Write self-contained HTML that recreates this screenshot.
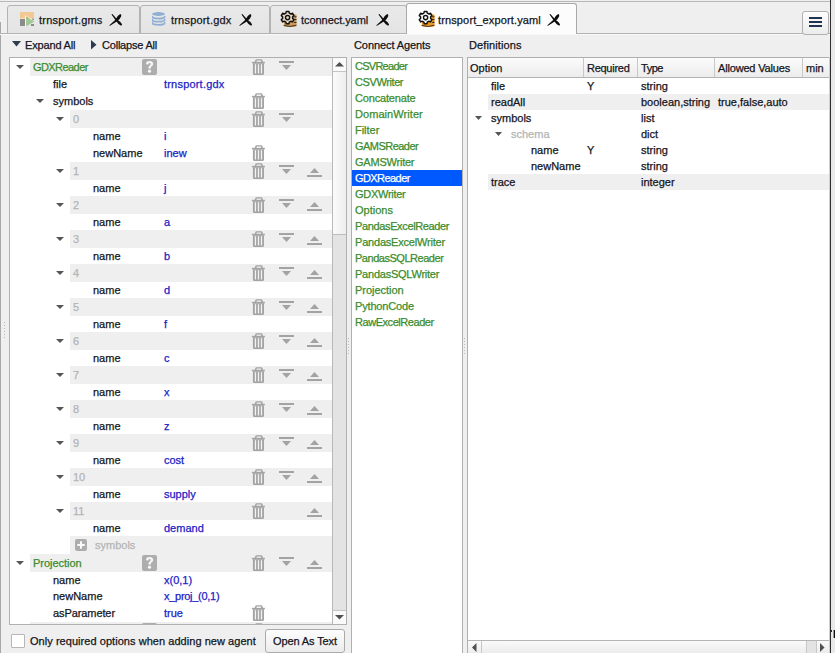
<!DOCTYPE html>
<html><head><meta charset="utf-8"><style>
html,body{margin:0;padding:0;}
body{width:835px;height:653px;position:relative;overflow:hidden;background:#efefef;font-family:"Liberation Sans", sans-serif;font-size:11px;}
.t{position:absolute;white-space:nowrap;-webkit-text-stroke:0.25px currentColor;}
svg{display:block}
</style></head><body>
<div style="position:absolute;left:0px;top:1px;width:835px;height:1px;background:#b9b9b9"></div><div style="position:absolute;left:0px;top:22px;width:1px;height:631px;background:#a8a8a8"></div><div style="position:absolute;left:7px;top:5px;width:133px;height:29px;background:linear-gradient(#e9e9e9,#e4e4e4);border:1px solid #b3b3b3;border-radius:3px 3px 0 0;box-sizing:border-box"></div><div style="position:absolute;left:140px;top:5px;width:130px;height:29px;background:linear-gradient(#e9e9e9,#e4e4e4);border:1px solid #b3b3b3;border-radius:3px 3px 0 0;box-sizing:border-box"></div><div style="position:absolute;left:270px;top:5px;width:137px;height:29px;background:linear-gradient(#e9e9e9,#e4e4e4);border:1px solid #b3b3b3;border-radius:3px 3px 0 0;box-sizing:border-box"></div><div style="position:absolute;left:0px;top:33px;width:835px;height:1px;background:#b3b3b3"></div><div style="position:absolute;left:0px;top:34px;width:835px;height:1px;background:#f8f8f8"></div><div style="position:absolute;left:406px;top:3px;width:171px;height:31px;background:#fcfcfc;border:1px solid #a9a9a9;border-bottom:none;border-radius:3px 3px 0 0;box-sizing:border-box"></div><svg style="position:absolute;left:20px;top:12px" width="16" height="15" viewBox="0 0 16 15">
<rect x="0" y="0" width="14" height="6.3" fill="#f3c993"/>
<rect x="0" y="7" width="5" height="7" fill="#8b8b8b"/>
<rect x="11" y="12" width="3" height="2" fill="#8b8b8b"/>
<rect x="12" y="6.5" width="2" height="2" fill="#9a9a9a"/>
<path d="M5.2 3.2 L15.3 9.6 L5.2 15Z" fill="#fff"/>
<path d="M6 4.4 L14.8 9.6 L6 14.6Z" fill="#a2c895"/>
<path d="M6 4.4 L9.5 6.4 L6 6.4Z" fill="#b7b060"/>
</svg><div class="t" style="left:39px;top:12px;height:16px;line-height:16px;color:#141420;letter-spacing:0.204px;">trnsport.gms</div><svg style="position:absolute;left:109px;top:13px" width="14" height="14" viewBox="0 0 14 14">
<path d="M2.5 1.6 Q2.8 0.8 3.6 1.2 L8.2 6.4 Q12 8.8 13 11.3 Q13.2 12.8 11.7 12.5 Q9.4 11.6 6.9 7.8 Z" fill="#0d0d0d"/>
<path d="M11.2 1.1 Q12.7 1.3 12.2 3.2 Q11.2 5.8 8.2 8.3 L1 12.8 Q0.2 13 0.4 12.3 L6.4 6.8 Q8.6 2.4 11.2 1.1 Z" fill="#0d0d0d"/>
</svg><svg style="position:absolute;left:152px;top:12px" width="14" height="14" viewBox="0 0 14 14">
<ellipse cx="6.5" cy="2" rx="6.4" ry="1.9" fill="#90b0d3"/>
<path d="M0.3 4.6 Q0.3 6.6 6.5 6.6 Q12.7 6.6 12.7 4.6" fill="none" stroke="#90b0d3" stroke-width="1.8" stroke-linecap="round"/>
<path d="M0.3 7.7 Q0.3 9.7 6.5 9.7 Q12.7 9.7 12.7 7.7" fill="none" stroke="#90b0d3" stroke-width="1.8" stroke-linecap="round"/>
<path d="M0.3 10.8 Q0.3 12.8 6.5 12.8 Q12.7 12.8 12.7 10.8" fill="none" stroke="#90b0d3" stroke-width="1.8" stroke-linecap="round"/>
</svg><div class="t" style="left:171px;top:12px;height:16px;line-height:16px;color:#141420;letter-spacing:0.198px;">trnsport.gdx</div><svg style="position:absolute;left:239px;top:13px" width="14" height="14" viewBox="0 0 14 14">
<path d="M2.5 1.6 Q2.8 0.8 3.6 1.2 L8.2 6.4 Q12 8.8 13 11.3 Q13.2 12.8 11.7 12.5 Q9.4 11.6 6.9 7.8 Z" fill="#0d0d0d"/>
<path d="M11.2 1.1 Q12.7 1.3 12.2 3.2 Q11.2 5.8 8.2 8.3 L1 12.8 Q0.2 13 0.4 12.3 L6.4 6.8 Q8.6 2.4 11.2 1.1 Z" fill="#0d0d0d"/>
</svg><svg style="position:absolute;left:280px;top:10px" width="18" height="18" viewBox="0 0 18 18">
<path d="M4 4.5 H16.5 V15.8 Q16.5 17 10.2 17 Q4 17 4 15.8Z" fill="#cf9a58"/>
<path d="M14.2 6.8 h2.3 M14.2 9.6 h2.3 M14.2 12.4 h2.3" stroke="#222" stroke-width="1"/>
<path d="M3.5 15.4 Q10 17.6 16.5 15.2" stroke="#2a2a2a" stroke-width="0.9" fill="none"/>
<g transform="translate(7.6 7.6)">
<path d="M-1.3 -6.2 H1.3 L1.7 -4.5 L3.4 -3.6 L5 -4.3 L6.3 -2 L5 -0.9 V0.9 L6.3 2 L5 4.3 L3.4 3.6 L1.7 4.5 L1.3 6.2 H-1.3 L-1.7 4.5 L-3.4 3.6 L-5 4.3 L-6.3 2 L-5 0.9 V-0.9 L-6.3 -2 L-5 -4.3 L-3.4 -3.6 L-1.7 -4.5Z" fill="#e9dcc6" stroke="#111" stroke-width="1.5" stroke-linejoin="round"/>
<circle r="2.1" fill="none" stroke="#111" stroke-width="1.4"/>
</g></svg><div class="t" style="left:301px;top:12px;height:16px;line-height:16px;color:#141420;letter-spacing:-0.054px;">tconnect.yaml</div><svg style="position:absolute;left:376px;top:13px" width="14" height="14" viewBox="0 0 14 14">
<path d="M2.5 1.6 Q2.8 0.8 3.6 1.2 L8.2 6.4 Q12 8.8 13 11.3 Q13.2 12.8 11.7 12.5 Q9.4 11.6 6.9 7.8 Z" fill="#0d0d0d"/>
<path d="M11.2 1.1 Q12.7 1.3 12.2 3.2 Q11.2 5.8 8.2 8.3 L1 12.8 Q0.2 13 0.4 12.3 L6.4 6.8 Q8.6 2.4 11.2 1.1 Z" fill="#0d0d0d"/>
</svg><svg style="position:absolute;left:417.5px;top:9.7px" width="18" height="18" viewBox="0 0 18 18">
<path d="M4 4.5 H16.5 V15.8 Q16.5 17 10.2 17 Q4 17 4 15.8Z" fill="#f29a1f"/>
<path d="M14.2 6.8 h2.3 M14.2 9.6 h2.3 M14.2 12.4 h2.3" stroke="#222" stroke-width="1"/>
<path d="M3.5 15.4 Q10 17.6 16.5 15.2" stroke="#2a2a2a" stroke-width="0.9" fill="none"/>
<g transform="translate(7.6 7.6)">
<path d="M-1.3 -6.2 H1.3 L1.7 -4.5 L3.4 -3.6 L5 -4.3 L6.3 -2 L5 -0.9 V0.9 L6.3 2 L5 4.3 L3.4 3.6 L1.7 4.5 L1.3 6.2 H-1.3 L-1.7 4.5 L-3.4 3.6 L-5 4.3 L-6.3 2 L-5 0.9 V-0.9 L-6.3 -2 L-5 -4.3 L-3.4 -3.6 L-1.7 -4.5Z" fill="#fff" stroke="#111" stroke-width="1.5" stroke-linejoin="round"/>
<circle r="2.1" fill="none" stroke="#111" stroke-width="1.4"/>
</g></svg><div class="t" style="left:438px;top:12px;height:16px;line-height:16px;color:#141420;letter-spacing:0.134px;">trnsport_export.yaml</div><svg style="position:absolute;left:547px;top:13px" width="14" height="14" viewBox="0 0 14 14">
<path d="M2.5 1.6 Q2.8 0.8 3.6 1.2 L8.2 6.4 Q12 8.8 13 11.3 Q13.2 12.8 11.7 12.5 Q9.4 11.6 6.9 7.8 Z" fill="#0d0d0d"/>
<path d="M11.2 1.1 Q12.7 1.3 12.2 3.2 Q11.2 5.8 8.2 8.3 L1 12.8 Q0.2 13 0.4 12.3 L6.4 6.8 Q8.6 2.4 11.2 1.1 Z" fill="#0d0d0d"/>
</svg><div style="position:absolute;left:802px;top:11px;width:27px;height:24px;background:linear-gradient(#fdfdfd,#ececec);border:1px solid #b0b0b0;border-radius:3px;box-sizing:border-box"></div><div style="position:absolute;left:809px;top:17px;width:13px;height:2px;background:#1f3450"></div><div style="position:absolute;left:809px;top:21px;width:13px;height:2px;background:#1f3450"></div><div style="position:absolute;left:809px;top:25px;width:13px;height:2px;background:#1f3450"></div><svg style="position:absolute;left:12px;top:41px" width="9" height="5.6"><path d="M0 0H9L4.5 5.6Z" fill="#2f3d50"/></svg><div class="t" style="left:25px;top:37px;height:16px;line-height:16px;color:#141420;letter-spacing:-0.162px;">Expand All</div><svg style="position:absolute;left:91px;top:40px" width="6" height="10"><path d="M0 0L5.5 4.8L0 9.6Z" fill="#2e3b4e"/></svg><div class="t" style="left:102px;top:37px;height:16px;line-height:16px;color:#141420;letter-spacing:-0.207px;">Collapse All</div><div class="t" style="left:354px;top:37px;height:16px;line-height:16px;color:#141420;letter-spacing:-0.088px;">Connect Agents</div><div class="t" style="left:469px;top:37px;height:16px;line-height:16px;color:#141420;letter-spacing:0.102px;">Definitions</div><div style="position:absolute;left:9px;top:57px;width:338px;height:568px;border:1px solid #b0b0b0;box-sizing:border-box;background:#fff;overflow:hidden"><div style="position:absolute;left:20px;top:0px;width:302px;height:18px;background:#efefef"></div><svg style="position:absolute;left:6px;top:7px" width="8" height="4"><path d="M0 0H8L4 4Z" fill="#555"/></svg><div class="t" style="left:23px;top:1px;height:16px;line-height:16px;color:#3b8c2c;letter-spacing:-0.571px;">GDXReader</div><svg style="position:absolute;left:132px;top:1px" width="15" height="16" viewBox="0 0 15 16">
<rect x="0" y="0" width="15" height="16" rx="2" fill="#adadad"/>
<path d="M4 5.3 Q4 2 7.6 2 Q11.2 2 11.2 4.9 Q11.2 6.6 9.4 7.6 Q8.7 8 8.7 9.6 H6.3 Q6.3 7.6 7.5 6.8 Q8.7 6 8.7 5.1 Q8.7 4.1 7.6 4.1 Q6.5 4.1 6.5 5.5Z" fill="#f6f6f6"/>
<circle cx="7.5" cy="12.2" r="1.6" fill="#f6f6f6"/></svg><svg style="position:absolute;left:241px;top:1px" width="15" height="17" viewBox="0 0 15 17">
<path d="M3.7 2.9 L4.5 0.8 Q4.7 0.2 5.4 0.2 H10.4 Q11.1 0.2 11.3 0.8 L12 2.9 H10.3 L9.9 1.5 H5.8 L5.4 2.9Z" fill="#a3a3a3"/>
<rect x="0.9" y="2.8" width="13" height="1.5" fill="#a3a3a3"/>
<path d="M1.9 4.3 H13 V14.4 Q13 15.9 11.5 15.9 H3.4 Q1.9 15.9 1.9 14.4Z" fill="#a3a3a3"/>
<rect x="3.8" y="5.2" width="1.3" height="9.3" fill="#f3f3f3"/>
<rect x="6.85" y="5.2" width="1.3" height="9.3" fill="#f3f3f3"/>
<rect x="9.85" y="5.2" width="1.3" height="9.3" fill="#f3f3f3"/>
</svg><svg style="position:absolute;left:269px;top:3px" width="15" height="10" viewBox="0 0 15 10">
<rect x="0" y="0" width="15" height="2" fill="#a3a3a3"/>
<path d="M3 4 H12 L7.5 9Z" fill="#a3a3a3"/></svg><div class="t" style="left:43px;top:18px;height:16px;line-height:16px;color:#141420;">file</div><div class="t" style="left:154px;top:18px;height:16px;line-height:16px;color:#2020c4;letter-spacing:0.198px;">trnsport.gdx</div><svg style="position:absolute;left:26px;top:41px" width="8" height="4"><path d="M0 0H8L4 4Z" fill="#555"/></svg><div class="t" style="left:43px;top:35px;height:16px;line-height:16px;color:#141420;">symbols</div><svg style="position:absolute;left:241px;top:35px" width="15" height="17" viewBox="0 0 15 17">
<path d="M3.7 2.9 L4.5 0.8 Q4.7 0.2 5.4 0.2 H10.4 Q11.1 0.2 11.3 0.8 L12 2.9 H10.3 L9.9 1.5 H5.8 L5.4 2.9Z" fill="#a3a3a3"/>
<rect x="0.9" y="2.8" width="13" height="1.5" fill="#a3a3a3"/>
<path d="M1.9 4.3 H13 V14.4 Q13 15.9 11.5 15.9 H3.4 Q1.9 15.9 1.9 14.4Z" fill="#a3a3a3"/>
<rect x="3.8" y="5.2" width="1.3" height="9.3" fill="#f3f3f3"/>
<rect x="6.85" y="5.2" width="1.3" height="9.3" fill="#f3f3f3"/>
<rect x="9.85" y="5.2" width="1.3" height="9.3" fill="#f3f3f3"/>
</svg><div style="position:absolute;left:60px;top:52px;width:262px;height:18px;background:#efefef"></div><svg style="position:absolute;left:46px;top:59px" width="8" height="4"><path d="M0 0H8L4 4Z" fill="#555"/></svg><div class="t" style="left:63px;top:53px;height:16px;line-height:16px;color:#b4b4b4;">0</div><svg style="position:absolute;left:241px;top:53px" width="15" height="17" viewBox="0 0 15 17">
<path d="M3.7 2.9 L4.5 0.8 Q4.7 0.2 5.4 0.2 H10.4 Q11.1 0.2 11.3 0.8 L12 2.9 H10.3 L9.9 1.5 H5.8 L5.4 2.9Z" fill="#a3a3a3"/>
<rect x="0.9" y="2.8" width="13" height="1.5" fill="#a3a3a3"/>
<path d="M1.9 4.3 H13 V14.4 Q13 15.9 11.5 15.9 H3.4 Q1.9 15.9 1.9 14.4Z" fill="#a3a3a3"/>
<rect x="3.8" y="5.2" width="1.3" height="9.3" fill="#f3f3f3"/>
<rect x="6.85" y="5.2" width="1.3" height="9.3" fill="#f3f3f3"/>
<rect x="9.85" y="5.2" width="1.3" height="9.3" fill="#f3f3f3"/>
</svg><svg style="position:absolute;left:269px;top:55px" width="15" height="10" viewBox="0 0 15 10">
<rect x="0" y="0" width="15" height="2" fill="#a3a3a3"/>
<path d="M3 4 H12 L7.5 9Z" fill="#a3a3a3"/></svg><div class="t" style="left:83px;top:70px;height:16px;line-height:16px;color:#141420;">name</div><div class="t" style="left:154px;top:70px;height:16px;line-height:16px;color:#2020c4;">i</div><div class="t" style="left:83px;top:87px;height:16px;line-height:16px;color:#141420;">newName</div><div class="t" style="left:154px;top:87px;height:16px;line-height:16px;color:#2020c4;">inew</div><svg style="position:absolute;left:241px;top:87px" width="15" height="17" viewBox="0 0 15 17">
<path d="M3.7 2.9 L4.5 0.8 Q4.7 0.2 5.4 0.2 H10.4 Q11.1 0.2 11.3 0.8 L12 2.9 H10.3 L9.9 1.5 H5.8 L5.4 2.9Z" fill="#a3a3a3"/>
<rect x="0.9" y="2.8" width="13" height="1.5" fill="#a3a3a3"/>
<path d="M1.9 4.3 H13 V14.4 Q13 15.9 11.5 15.9 H3.4 Q1.9 15.9 1.9 14.4Z" fill="#a3a3a3"/>
<rect x="3.8" y="5.2" width="1.3" height="9.3" fill="#f3f3f3"/>
<rect x="6.85" y="5.2" width="1.3" height="9.3" fill="#f3f3f3"/>
<rect x="9.85" y="5.2" width="1.3" height="9.3" fill="#f3f3f3"/>
</svg><div style="position:absolute;left:60px;top:104px;width:262px;height:18px;background:#efefef"></div><svg style="position:absolute;left:46px;top:111px" width="8" height="4"><path d="M0 0H8L4 4Z" fill="#555"/></svg><div class="t" style="left:63px;top:105px;height:16px;line-height:16px;color:#b4b4b4;">1</div><svg style="position:absolute;left:241px;top:105px" width="15" height="17" viewBox="0 0 15 17">
<path d="M3.7 2.9 L4.5 0.8 Q4.7 0.2 5.4 0.2 H10.4 Q11.1 0.2 11.3 0.8 L12 2.9 H10.3 L9.9 1.5 H5.8 L5.4 2.9Z" fill="#a3a3a3"/>
<rect x="0.9" y="2.8" width="13" height="1.5" fill="#a3a3a3"/>
<path d="M1.9 4.3 H13 V14.4 Q13 15.9 11.5 15.9 H3.4 Q1.9 15.9 1.9 14.4Z" fill="#a3a3a3"/>
<rect x="3.8" y="5.2" width="1.3" height="9.3" fill="#f3f3f3"/>
<rect x="6.85" y="5.2" width="1.3" height="9.3" fill="#f3f3f3"/>
<rect x="9.85" y="5.2" width="1.3" height="9.3" fill="#f3f3f3"/>
</svg><svg style="position:absolute;left:269px;top:107px" width="15" height="10" viewBox="0 0 15 10">
<rect x="0" y="0" width="15" height="2" fill="#a3a3a3"/>
<path d="M3 4 H12 L7.5 9Z" fill="#a3a3a3"/></svg><svg style="position:absolute;left:297px;top:110px" width="15" height="11" viewBox="0 0 15 11">
<path d="M7.5 0 L12 5 H3Z" fill="#a3a3a3"/>
<rect x="0" y="7" width="15" height="2" fill="#a3a3a3"/></svg><div class="t" style="left:83px;top:122px;height:16px;line-height:16px;color:#141420;">name</div><div class="t" style="left:154px;top:122px;height:16px;line-height:16px;color:#2020c4;">j</div><div style="position:absolute;left:60px;top:138px;width:262px;height:18px;background:#efefef"></div><svg style="position:absolute;left:46px;top:145px" width="8" height="4"><path d="M0 0H8L4 4Z" fill="#555"/></svg><div class="t" style="left:63px;top:139px;height:16px;line-height:16px;color:#b4b4b4;">2</div><svg style="position:absolute;left:241px;top:139px" width="15" height="17" viewBox="0 0 15 17">
<path d="M3.7 2.9 L4.5 0.8 Q4.7 0.2 5.4 0.2 H10.4 Q11.1 0.2 11.3 0.8 L12 2.9 H10.3 L9.9 1.5 H5.8 L5.4 2.9Z" fill="#a3a3a3"/>
<rect x="0.9" y="2.8" width="13" height="1.5" fill="#a3a3a3"/>
<path d="M1.9 4.3 H13 V14.4 Q13 15.9 11.5 15.9 H3.4 Q1.9 15.9 1.9 14.4Z" fill="#a3a3a3"/>
<rect x="3.8" y="5.2" width="1.3" height="9.3" fill="#f3f3f3"/>
<rect x="6.85" y="5.2" width="1.3" height="9.3" fill="#f3f3f3"/>
<rect x="9.85" y="5.2" width="1.3" height="9.3" fill="#f3f3f3"/>
</svg><svg style="position:absolute;left:269px;top:141px" width="15" height="10" viewBox="0 0 15 10">
<rect x="0" y="0" width="15" height="2" fill="#a3a3a3"/>
<path d="M3 4 H12 L7.5 9Z" fill="#a3a3a3"/></svg><svg style="position:absolute;left:297px;top:144px" width="15" height="11" viewBox="0 0 15 11">
<path d="M7.5 0 L12 5 H3Z" fill="#a3a3a3"/>
<rect x="0" y="7" width="15" height="2" fill="#a3a3a3"/></svg><div class="t" style="left:83px;top:156px;height:16px;line-height:16px;color:#141420;">name</div><div class="t" style="left:154px;top:156px;height:16px;line-height:16px;color:#2020c4;">a</div><div style="position:absolute;left:60px;top:172px;width:262px;height:18px;background:#efefef"></div><svg style="position:absolute;left:46px;top:179px" width="8" height="4"><path d="M0 0H8L4 4Z" fill="#555"/></svg><div class="t" style="left:63px;top:173px;height:16px;line-height:16px;color:#b4b4b4;">3</div><svg style="position:absolute;left:241px;top:173px" width="15" height="17" viewBox="0 0 15 17">
<path d="M3.7 2.9 L4.5 0.8 Q4.7 0.2 5.4 0.2 H10.4 Q11.1 0.2 11.3 0.8 L12 2.9 H10.3 L9.9 1.5 H5.8 L5.4 2.9Z" fill="#a3a3a3"/>
<rect x="0.9" y="2.8" width="13" height="1.5" fill="#a3a3a3"/>
<path d="M1.9 4.3 H13 V14.4 Q13 15.9 11.5 15.9 H3.4 Q1.9 15.9 1.9 14.4Z" fill="#a3a3a3"/>
<rect x="3.8" y="5.2" width="1.3" height="9.3" fill="#f3f3f3"/>
<rect x="6.85" y="5.2" width="1.3" height="9.3" fill="#f3f3f3"/>
<rect x="9.85" y="5.2" width="1.3" height="9.3" fill="#f3f3f3"/>
</svg><svg style="position:absolute;left:269px;top:175px" width="15" height="10" viewBox="0 0 15 10">
<rect x="0" y="0" width="15" height="2" fill="#a3a3a3"/>
<path d="M3 4 H12 L7.5 9Z" fill="#a3a3a3"/></svg><svg style="position:absolute;left:297px;top:178px" width="15" height="11" viewBox="0 0 15 11">
<path d="M7.5 0 L12 5 H3Z" fill="#a3a3a3"/>
<rect x="0" y="7" width="15" height="2" fill="#a3a3a3"/></svg><div class="t" style="left:83px;top:190px;height:16px;line-height:16px;color:#141420;">name</div><div class="t" style="left:154px;top:190px;height:16px;line-height:16px;color:#2020c4;">b</div><div style="position:absolute;left:60px;top:206px;width:262px;height:18px;background:#efefef"></div><svg style="position:absolute;left:46px;top:213px" width="8" height="4"><path d="M0 0H8L4 4Z" fill="#555"/></svg><div class="t" style="left:63px;top:207px;height:16px;line-height:16px;color:#b4b4b4;">4</div><svg style="position:absolute;left:241px;top:207px" width="15" height="17" viewBox="0 0 15 17">
<path d="M3.7 2.9 L4.5 0.8 Q4.7 0.2 5.4 0.2 H10.4 Q11.1 0.2 11.3 0.8 L12 2.9 H10.3 L9.9 1.5 H5.8 L5.4 2.9Z" fill="#a3a3a3"/>
<rect x="0.9" y="2.8" width="13" height="1.5" fill="#a3a3a3"/>
<path d="M1.9 4.3 H13 V14.4 Q13 15.9 11.5 15.9 H3.4 Q1.9 15.9 1.9 14.4Z" fill="#a3a3a3"/>
<rect x="3.8" y="5.2" width="1.3" height="9.3" fill="#f3f3f3"/>
<rect x="6.85" y="5.2" width="1.3" height="9.3" fill="#f3f3f3"/>
<rect x="9.85" y="5.2" width="1.3" height="9.3" fill="#f3f3f3"/>
</svg><svg style="position:absolute;left:269px;top:209px" width="15" height="10" viewBox="0 0 15 10">
<rect x="0" y="0" width="15" height="2" fill="#a3a3a3"/>
<path d="M3 4 H12 L7.5 9Z" fill="#a3a3a3"/></svg><svg style="position:absolute;left:297px;top:212px" width="15" height="11" viewBox="0 0 15 11">
<path d="M7.5 0 L12 5 H3Z" fill="#a3a3a3"/>
<rect x="0" y="7" width="15" height="2" fill="#a3a3a3"/></svg><div class="t" style="left:83px;top:224px;height:16px;line-height:16px;color:#141420;">name</div><div class="t" style="left:154px;top:224px;height:16px;line-height:16px;color:#2020c4;">d</div><div style="position:absolute;left:60px;top:240px;width:262px;height:18px;background:#efefef"></div><svg style="position:absolute;left:46px;top:247px" width="8" height="4"><path d="M0 0H8L4 4Z" fill="#555"/></svg><div class="t" style="left:63px;top:241px;height:16px;line-height:16px;color:#b4b4b4;">5</div><svg style="position:absolute;left:241px;top:241px" width="15" height="17" viewBox="0 0 15 17">
<path d="M3.7 2.9 L4.5 0.8 Q4.7 0.2 5.4 0.2 H10.4 Q11.1 0.2 11.3 0.8 L12 2.9 H10.3 L9.9 1.5 H5.8 L5.4 2.9Z" fill="#a3a3a3"/>
<rect x="0.9" y="2.8" width="13" height="1.5" fill="#a3a3a3"/>
<path d="M1.9 4.3 H13 V14.4 Q13 15.9 11.5 15.9 H3.4 Q1.9 15.9 1.9 14.4Z" fill="#a3a3a3"/>
<rect x="3.8" y="5.2" width="1.3" height="9.3" fill="#f3f3f3"/>
<rect x="6.85" y="5.2" width="1.3" height="9.3" fill="#f3f3f3"/>
<rect x="9.85" y="5.2" width="1.3" height="9.3" fill="#f3f3f3"/>
</svg><svg style="position:absolute;left:269px;top:243px" width="15" height="10" viewBox="0 0 15 10">
<rect x="0" y="0" width="15" height="2" fill="#a3a3a3"/>
<path d="M3 4 H12 L7.5 9Z" fill="#a3a3a3"/></svg><svg style="position:absolute;left:297px;top:246px" width="15" height="11" viewBox="0 0 15 11">
<path d="M7.5 0 L12 5 H3Z" fill="#a3a3a3"/>
<rect x="0" y="7" width="15" height="2" fill="#a3a3a3"/></svg><div class="t" style="left:83px;top:258px;height:16px;line-height:16px;color:#141420;">name</div><div class="t" style="left:154px;top:258px;height:16px;line-height:16px;color:#2020c4;">f</div><div style="position:absolute;left:60px;top:274px;width:262px;height:18px;background:#efefef"></div><svg style="position:absolute;left:46px;top:281px" width="8" height="4"><path d="M0 0H8L4 4Z" fill="#555"/></svg><div class="t" style="left:63px;top:275px;height:16px;line-height:16px;color:#b4b4b4;">6</div><svg style="position:absolute;left:241px;top:275px" width="15" height="17" viewBox="0 0 15 17">
<path d="M3.7 2.9 L4.5 0.8 Q4.7 0.2 5.4 0.2 H10.4 Q11.1 0.2 11.3 0.8 L12 2.9 H10.3 L9.9 1.5 H5.8 L5.4 2.9Z" fill="#a3a3a3"/>
<rect x="0.9" y="2.8" width="13" height="1.5" fill="#a3a3a3"/>
<path d="M1.9 4.3 H13 V14.4 Q13 15.9 11.5 15.9 H3.4 Q1.9 15.9 1.9 14.4Z" fill="#a3a3a3"/>
<rect x="3.8" y="5.2" width="1.3" height="9.3" fill="#f3f3f3"/>
<rect x="6.85" y="5.2" width="1.3" height="9.3" fill="#f3f3f3"/>
<rect x="9.85" y="5.2" width="1.3" height="9.3" fill="#f3f3f3"/>
</svg><svg style="position:absolute;left:269px;top:277px" width="15" height="10" viewBox="0 0 15 10">
<rect x="0" y="0" width="15" height="2" fill="#a3a3a3"/>
<path d="M3 4 H12 L7.5 9Z" fill="#a3a3a3"/></svg><svg style="position:absolute;left:297px;top:280px" width="15" height="11" viewBox="0 0 15 11">
<path d="M7.5 0 L12 5 H3Z" fill="#a3a3a3"/>
<rect x="0" y="7" width="15" height="2" fill="#a3a3a3"/></svg><div class="t" style="left:83px;top:292px;height:16px;line-height:16px;color:#141420;">name</div><div class="t" style="left:154px;top:292px;height:16px;line-height:16px;color:#2020c4;">c</div><div style="position:absolute;left:60px;top:308px;width:262px;height:18px;background:#efefef"></div><svg style="position:absolute;left:46px;top:315px" width="8" height="4"><path d="M0 0H8L4 4Z" fill="#555"/></svg><div class="t" style="left:63px;top:309px;height:16px;line-height:16px;color:#b4b4b4;">7</div><svg style="position:absolute;left:241px;top:309px" width="15" height="17" viewBox="0 0 15 17">
<path d="M3.7 2.9 L4.5 0.8 Q4.7 0.2 5.4 0.2 H10.4 Q11.1 0.2 11.3 0.8 L12 2.9 H10.3 L9.9 1.5 H5.8 L5.4 2.9Z" fill="#a3a3a3"/>
<rect x="0.9" y="2.8" width="13" height="1.5" fill="#a3a3a3"/>
<path d="M1.9 4.3 H13 V14.4 Q13 15.9 11.5 15.9 H3.4 Q1.9 15.9 1.9 14.4Z" fill="#a3a3a3"/>
<rect x="3.8" y="5.2" width="1.3" height="9.3" fill="#f3f3f3"/>
<rect x="6.85" y="5.2" width="1.3" height="9.3" fill="#f3f3f3"/>
<rect x="9.85" y="5.2" width="1.3" height="9.3" fill="#f3f3f3"/>
</svg><svg style="position:absolute;left:269px;top:311px" width="15" height="10" viewBox="0 0 15 10">
<rect x="0" y="0" width="15" height="2" fill="#a3a3a3"/>
<path d="M3 4 H12 L7.5 9Z" fill="#a3a3a3"/></svg><svg style="position:absolute;left:297px;top:314px" width="15" height="11" viewBox="0 0 15 11">
<path d="M7.5 0 L12 5 H3Z" fill="#a3a3a3"/>
<rect x="0" y="7" width="15" height="2" fill="#a3a3a3"/></svg><div class="t" style="left:83px;top:326px;height:16px;line-height:16px;color:#141420;">name</div><div class="t" style="left:154px;top:326px;height:16px;line-height:16px;color:#2020c4;">x</div><div style="position:absolute;left:60px;top:342px;width:262px;height:18px;background:#efefef"></div><svg style="position:absolute;left:46px;top:349px" width="8" height="4"><path d="M0 0H8L4 4Z" fill="#555"/></svg><div class="t" style="left:63px;top:343px;height:16px;line-height:16px;color:#b4b4b4;">8</div><svg style="position:absolute;left:241px;top:343px" width="15" height="17" viewBox="0 0 15 17">
<path d="M3.7 2.9 L4.5 0.8 Q4.7 0.2 5.4 0.2 H10.4 Q11.1 0.2 11.3 0.8 L12 2.9 H10.3 L9.9 1.5 H5.8 L5.4 2.9Z" fill="#a3a3a3"/>
<rect x="0.9" y="2.8" width="13" height="1.5" fill="#a3a3a3"/>
<path d="M1.9 4.3 H13 V14.4 Q13 15.9 11.5 15.9 H3.4 Q1.9 15.9 1.9 14.4Z" fill="#a3a3a3"/>
<rect x="3.8" y="5.2" width="1.3" height="9.3" fill="#f3f3f3"/>
<rect x="6.85" y="5.2" width="1.3" height="9.3" fill="#f3f3f3"/>
<rect x="9.85" y="5.2" width="1.3" height="9.3" fill="#f3f3f3"/>
</svg><svg style="position:absolute;left:269px;top:345px" width="15" height="10" viewBox="0 0 15 10">
<rect x="0" y="0" width="15" height="2" fill="#a3a3a3"/>
<path d="M3 4 H12 L7.5 9Z" fill="#a3a3a3"/></svg><svg style="position:absolute;left:297px;top:348px" width="15" height="11" viewBox="0 0 15 11">
<path d="M7.5 0 L12 5 H3Z" fill="#a3a3a3"/>
<rect x="0" y="7" width="15" height="2" fill="#a3a3a3"/></svg><div class="t" style="left:83px;top:360px;height:16px;line-height:16px;color:#141420;">name</div><div class="t" style="left:154px;top:360px;height:16px;line-height:16px;color:#2020c4;">z</div><div style="position:absolute;left:60px;top:376px;width:262px;height:18px;background:#efefef"></div><svg style="position:absolute;left:46px;top:383px" width="8" height="4"><path d="M0 0H8L4 4Z" fill="#555"/></svg><div class="t" style="left:63px;top:377px;height:16px;line-height:16px;color:#b4b4b4;">9</div><svg style="position:absolute;left:241px;top:377px" width="15" height="17" viewBox="0 0 15 17">
<path d="M3.7 2.9 L4.5 0.8 Q4.7 0.2 5.4 0.2 H10.4 Q11.1 0.2 11.3 0.8 L12 2.9 H10.3 L9.9 1.5 H5.8 L5.4 2.9Z" fill="#a3a3a3"/>
<rect x="0.9" y="2.8" width="13" height="1.5" fill="#a3a3a3"/>
<path d="M1.9 4.3 H13 V14.4 Q13 15.9 11.5 15.9 H3.4 Q1.9 15.9 1.9 14.4Z" fill="#a3a3a3"/>
<rect x="3.8" y="5.2" width="1.3" height="9.3" fill="#f3f3f3"/>
<rect x="6.85" y="5.2" width="1.3" height="9.3" fill="#f3f3f3"/>
<rect x="9.85" y="5.2" width="1.3" height="9.3" fill="#f3f3f3"/>
</svg><svg style="position:absolute;left:269px;top:379px" width="15" height="10" viewBox="0 0 15 10">
<rect x="0" y="0" width="15" height="2" fill="#a3a3a3"/>
<path d="M3 4 H12 L7.5 9Z" fill="#a3a3a3"/></svg><svg style="position:absolute;left:297px;top:382px" width="15" height="11" viewBox="0 0 15 11">
<path d="M7.5 0 L12 5 H3Z" fill="#a3a3a3"/>
<rect x="0" y="7" width="15" height="2" fill="#a3a3a3"/></svg><div class="t" style="left:83px;top:394px;height:16px;line-height:16px;color:#141420;">name</div><div class="t" style="left:154px;top:394px;height:16px;line-height:16px;color:#2020c4;">cost</div><div style="position:absolute;left:60px;top:410px;width:262px;height:18px;background:#efefef"></div><svg style="position:absolute;left:46px;top:417px" width="8" height="4"><path d="M0 0H8L4 4Z" fill="#555"/></svg><div class="t" style="left:63px;top:411px;height:16px;line-height:16px;color:#b4b4b4;">10</div><svg style="position:absolute;left:241px;top:411px" width="15" height="17" viewBox="0 0 15 17">
<path d="M3.7 2.9 L4.5 0.8 Q4.7 0.2 5.4 0.2 H10.4 Q11.1 0.2 11.3 0.8 L12 2.9 H10.3 L9.9 1.5 H5.8 L5.4 2.9Z" fill="#a3a3a3"/>
<rect x="0.9" y="2.8" width="13" height="1.5" fill="#a3a3a3"/>
<path d="M1.9 4.3 H13 V14.4 Q13 15.9 11.5 15.9 H3.4 Q1.9 15.9 1.9 14.4Z" fill="#a3a3a3"/>
<rect x="3.8" y="5.2" width="1.3" height="9.3" fill="#f3f3f3"/>
<rect x="6.85" y="5.2" width="1.3" height="9.3" fill="#f3f3f3"/>
<rect x="9.85" y="5.2" width="1.3" height="9.3" fill="#f3f3f3"/>
</svg><svg style="position:absolute;left:269px;top:413px" width="15" height="10" viewBox="0 0 15 10">
<rect x="0" y="0" width="15" height="2" fill="#a3a3a3"/>
<path d="M3 4 H12 L7.5 9Z" fill="#a3a3a3"/></svg><svg style="position:absolute;left:297px;top:416px" width="15" height="11" viewBox="0 0 15 11">
<path d="M7.5 0 L12 5 H3Z" fill="#a3a3a3"/>
<rect x="0" y="7" width="15" height="2" fill="#a3a3a3"/></svg><div class="t" style="left:83px;top:428px;height:16px;line-height:16px;color:#141420;">name</div><div class="t" style="left:154px;top:428px;height:16px;line-height:16px;color:#2020c4;">supply</div><div style="position:absolute;left:60px;top:444px;width:262px;height:18px;background:#efefef"></div><svg style="position:absolute;left:46px;top:451px" width="8" height="4"><path d="M0 0H8L4 4Z" fill="#555"/></svg><div class="t" style="left:63px;top:445px;height:16px;line-height:16px;color:#b4b4b4;">11</div><svg style="position:absolute;left:241px;top:445px" width="15" height="17" viewBox="0 0 15 17">
<path d="M3.7 2.9 L4.5 0.8 Q4.7 0.2 5.4 0.2 H10.4 Q11.1 0.2 11.3 0.8 L12 2.9 H10.3 L9.9 1.5 H5.8 L5.4 2.9Z" fill="#a3a3a3"/>
<rect x="0.9" y="2.8" width="13" height="1.5" fill="#a3a3a3"/>
<path d="M1.9 4.3 H13 V14.4 Q13 15.9 11.5 15.9 H3.4 Q1.9 15.9 1.9 14.4Z" fill="#a3a3a3"/>
<rect x="3.8" y="5.2" width="1.3" height="9.3" fill="#f3f3f3"/>
<rect x="6.85" y="5.2" width="1.3" height="9.3" fill="#f3f3f3"/>
<rect x="9.85" y="5.2" width="1.3" height="9.3" fill="#f3f3f3"/>
</svg><svg style="position:absolute;left:297px;top:450px" width="15" height="11" viewBox="0 0 15 11">
<path d="M7.5 0 L12 5 H3Z" fill="#a3a3a3"/>
<rect x="0" y="7" width="15" height="2" fill="#a3a3a3"/></svg><div class="t" style="left:83px;top:462px;height:16px;line-height:16px;color:#141420;">name</div><div class="t" style="left:154px;top:462px;height:16px;line-height:16px;color:#2020c4;">demand</div><div style="position:absolute;left:60px;top:478px;width:262px;height:18px;background:#efefef"></div><svg style="position:absolute;left:65px;top:481px" width="12" height="12" viewBox="0 0 12 12">
<rect x="0" y="0" width="12" height="12" rx="2" fill="#adadad"/>
<rect x="5" y="2.3" width="2" height="7.4" fill="#fafafa"/>
<rect x="2.3" y="5" width="7.4" height="2" fill="#fafafa"/></svg><div class="t" style="left:85px;top:479px;height:16px;line-height:16px;color:#b4b4b4;">symbols</div><div style="position:absolute;left:20px;top:496px;width:302px;height:18px;background:#efefef"></div><svg style="position:absolute;left:6px;top:503px" width="8" height="4"><path d="M0 0H8L4 4Z" fill="#555"/></svg><div class="t" style="left:23px;top:497px;height:16px;line-height:16px;color:#3b8c2c;letter-spacing:-0.024px;">Projection</div><svg style="position:absolute;left:132px;top:497px" width="15" height="16" viewBox="0 0 15 16">
<rect x="0" y="0" width="15" height="16" rx="2" fill="#adadad"/>
<path d="M4 5.3 Q4 2 7.6 2 Q11.2 2 11.2 4.9 Q11.2 6.6 9.4 7.6 Q8.7 8 8.7 9.6 H6.3 Q6.3 7.6 7.5 6.8 Q8.7 6 8.7 5.1 Q8.7 4.1 7.6 4.1 Q6.5 4.1 6.5 5.5Z" fill="#f6f6f6"/>
<circle cx="7.5" cy="12.2" r="1.6" fill="#f6f6f6"/></svg><svg style="position:absolute;left:241px;top:497px" width="15" height="17" viewBox="0 0 15 17">
<path d="M3.7 2.9 L4.5 0.8 Q4.7 0.2 5.4 0.2 H10.4 Q11.1 0.2 11.3 0.8 L12 2.9 H10.3 L9.9 1.5 H5.8 L5.4 2.9Z" fill="#a3a3a3"/>
<rect x="0.9" y="2.8" width="13" height="1.5" fill="#a3a3a3"/>
<path d="M1.9 4.3 H13 V14.4 Q13 15.9 11.5 15.9 H3.4 Q1.9 15.9 1.9 14.4Z" fill="#a3a3a3"/>
<rect x="3.8" y="5.2" width="1.3" height="9.3" fill="#f3f3f3"/>
<rect x="6.85" y="5.2" width="1.3" height="9.3" fill="#f3f3f3"/>
<rect x="9.85" y="5.2" width="1.3" height="9.3" fill="#f3f3f3"/>
</svg><svg style="position:absolute;left:269px;top:499px" width="15" height="10" viewBox="0 0 15 10">
<rect x="0" y="0" width="15" height="2" fill="#a3a3a3"/>
<path d="M3 4 H12 L7.5 9Z" fill="#a3a3a3"/></svg><svg style="position:absolute;left:297px;top:502px" width="15" height="11" viewBox="0 0 15 11">
<path d="M7.5 0 L12 5 H3Z" fill="#a3a3a3"/>
<rect x="0" y="7" width="15" height="2" fill="#a3a3a3"/></svg><div class="t" style="left:43px;top:514px;height:16px;line-height:16px;color:#141420;">name</div><div class="t" style="left:154px;top:514px;height:16px;line-height:16px;color:#2020c4;">x(0,1)</div><div class="t" style="left:43px;top:530px;height:16px;line-height:16px;color:#141420;">newName</div><div class="t" style="left:154px;top:530px;height:16px;line-height:16px;color:#2020c4;letter-spacing:-0.285px;">x_proj_(0,1)</div><div class="t" style="left:43px;top:547px;height:16px;line-height:16px;color:#141420;letter-spacing:-0.091px;">asParameter</div><div class="t" style="left:154px;top:547px;height:16px;line-height:16px;color:#2020c4;">true</div><svg style="position:absolute;left:241px;top:547px" width="15" height="17" viewBox="0 0 15 17">
<path d="M3.7 2.9 L4.5 0.8 Q4.7 0.2 5.4 0.2 H10.4 Q11.1 0.2 11.3 0.8 L12 2.9 H10.3 L9.9 1.5 H5.8 L5.4 2.9Z" fill="#a3a3a3"/>
<rect x="0.9" y="2.8" width="13" height="1.5" fill="#a3a3a3"/>
<path d="M1.9 4.3 H13 V14.4 Q13 15.9 11.5 15.9 H3.4 Q1.9 15.9 1.9 14.4Z" fill="#a3a3a3"/>
<rect x="3.8" y="5.2" width="1.3" height="9.3" fill="#f3f3f3"/>
<rect x="6.85" y="5.2" width="1.3" height="9.3" fill="#f3f3f3"/>
<rect x="9.85" y="5.2" width="1.3" height="9.3" fill="#f3f3f3"/>
</svg><div style="position:absolute;left:20px;top:564px;width:302px;height:18px;background:#efefef"></div><svg style="position:absolute;left:132px;top:565px" width="15" height="16" viewBox="0 0 15 16">
<rect x="0" y="0" width="15" height="16" rx="2" fill="#adadad"/>
<path d="M4 5.3 Q4 2 7.6 2 Q11.2 2 11.2 4.9 Q11.2 6.6 9.4 7.6 Q8.7 8 8.7 9.6 H6.3 Q6.3 7.6 7.5 6.8 Q8.7 6 8.7 5.1 Q8.7 4.1 7.6 4.1 Q6.5 4.1 6.5 5.5Z" fill="#f6f6f6"/>
<circle cx="7.5" cy="12.2" r="1.6" fill="#f6f6f6"/></svg><svg style="position:absolute;left:241px;top:565px" width="15" height="17" viewBox="0 0 15 17">
<path d="M3.7 2.9 L4.5 0.8 Q4.7 0.2 5.4 0.2 H10.4 Q11.1 0.2 11.3 0.8 L12 2.9 H10.3 L9.9 1.5 H5.8 L5.4 2.9Z" fill="#a3a3a3"/>
<rect x="0.9" y="2.8" width="13" height="1.5" fill="#a3a3a3"/>
<path d="M1.9 4.3 H13 V14.4 Q13 15.9 11.5 15.9 H3.4 Q1.9 15.9 1.9 14.4Z" fill="#a3a3a3"/>
<rect x="3.8" y="5.2" width="1.3" height="9.3" fill="#f3f3f3"/>
<rect x="6.85" y="5.2" width="1.3" height="9.3" fill="#f3f3f3"/>
<rect x="9.85" y="5.2" width="1.3" height="9.3" fill="#f3f3f3"/>
</svg><div style="position:absolute;left:322px;top:0px;width:14px;height:566px;background:linear-gradient(90deg,#fbfbfb,#ececec);border-left:1px solid #b8b8b8"></div><div style="position:absolute;left:322px;top:0px;width:14px;height:14px;background:#fafafa;border-left:1px solid #b8b8b8;border-bottom:1px solid #c4c4c4;box-sizing:border-box"></div><svg style="position:absolute;left:325px;top:4px" width="9" height="5"><path d="M0 4.5H9L4.5 0Z" fill="#505050"/></svg><div style="position:absolute;left:322px;top:176px;width:14px;height:377px;background:#e3e3e3;border-left:1px solid #b8b8b8;border-top:1px solid #bdbdbd;box-sizing:border-box"></div><div style="position:absolute;left:322px;top:552px;width:14px;height:14px;background:#fafafa;border-left:1px solid #b8b8b8;border-top:1px solid #c4c4c4;box-sizing:border-box"></div><svg style="position:absolute;left:325px;top:557px" width="9" height="5"><path d="M0 0H9L4.5 4.5Z" fill="#505050"/></svg></div><div style="position:absolute;left:11px;top:634px;width:14px;height:14px;background:#fff;border:1px solid #b6b6b6;border-radius:1px;box-sizing:border-box"></div><div class="t" style="left:30px;top:633px;height:16px;line-height:16px;color:#141420;letter-spacing:0.047px;">Only required options when adding new agent</div><div style="position:absolute;left:265px;top:629px;width:80px;height:24px;background:linear-gradient(#fdfdfd,#ececec);border:1px solid #aaa;border-radius:3px;box-sizing:border-box"></div><div class="t" style="left:273px;top:633px;height:16px;line-height:16px;color:#141420;letter-spacing:-0.107px;">Open As Text</div><div style="position:absolute;left:4px;top:322px;width:1px;height:1px;background:#b8b8b8"></div><div style="position:absolute;left:4px;top:325px;width:1px;height:1px;background:#b8b8b8"></div><div style="position:absolute;left:4px;top:328px;width:1px;height:1px;background:#b8b8b8"></div><div style="position:absolute;left:4px;top:331px;width:1px;height:1px;background:#b8b8b8"></div><div style="position:absolute;left:4px;top:334px;width:1px;height:1px;background:#b8b8b8"></div><div style="position:absolute;left:4px;top:337px;width:1px;height:1px;background:#b8b8b8"></div><div style="position:absolute;left:348px;top:338px;width:1px;height:1px;background:#b8b8b8"></div><div style="position:absolute;left:348px;top:341px;width:1px;height:1px;background:#b8b8b8"></div><div style="position:absolute;left:348px;top:344px;width:1px;height:1px;background:#b8b8b8"></div><div style="position:absolute;left:348px;top:347px;width:1px;height:1px;background:#b8b8b8"></div><div style="position:absolute;left:348px;top:350px;width:1px;height:1px;background:#b8b8b8"></div><div style="position:absolute;left:348px;top:353px;width:1px;height:1px;background:#b8b8b8"></div><div style="position:absolute;left:464px;top:338px;width:1px;height:1px;background:#b8b8b8"></div><div style="position:absolute;left:464px;top:341px;width:1px;height:1px;background:#b8b8b8"></div><div style="position:absolute;left:464px;top:344px;width:1px;height:1px;background:#b8b8b8"></div><div style="position:absolute;left:464px;top:347px;width:1px;height:1px;background:#b8b8b8"></div><div style="position:absolute;left:464px;top:350px;width:1px;height:1px;background:#b8b8b8"></div><div style="position:absolute;left:464px;top:353px;width:1px;height:1px;background:#b8b8b8"></div><div style="position:absolute;left:351px;top:57px;width:112px;height:600px;border:1px solid #b0b0b0;box-sizing:border-box;background:#fff"></div><div class="t" style="left:355px;top:58px;height:16px;line-height:16px;color:#3b8c2c;letter-spacing:-0.735px;">CSVReader</div><div class="t" style="left:355px;top:74px;height:16px;line-height:16px;color:#3b8c2c;letter-spacing:-0.404px;">CSVWriter</div><div class="t" style="left:355px;top:90px;height:16px;line-height:16px;color:#3b8c2c;letter-spacing:-0.167px;">Concatenate</div><div class="t" style="left:355px;top:106px;height:16px;line-height:16px;color:#3b8c2c;letter-spacing:0.065px;">DomainWriter</div><div class="t" style="left:355px;top:122px;height:16px;line-height:16px;color:#3b8c2c;letter-spacing:-0.023px;">Filter</div><div class="t" style="left:355px;top:138px;height:16px;line-height:16px;color:#3b8c2c;letter-spacing:-0.530px;">GAMSReader</div><div class="t" style="left:355px;top:154px;height:16px;line-height:16px;color:#3b8c2c;letter-spacing:-0.222px;">GAMSWriter</div><div style="position:absolute;left:352px;top:170px;width:110px;height:16px;background:#0059ff"></div><div class="t" style="left:355px;top:170px;height:16px;line-height:16px;color:#ffffff;letter-spacing:-0.571px;">GDXReader</div><div class="t" style="left:355px;top:186px;height:16px;line-height:16px;color:#3b8c2c;letter-spacing:-0.273px;">GDXWriter</div><div class="t" style="left:355px;top:202px;height:16px;line-height:16px;color:#3b8c2c;letter-spacing:0.009px;">Options</div><div class="t" style="left:355px;top:218px;height:16px;line-height:16px;color:#3b8c2c;letter-spacing:-0.361px;">PandasExcelReader</div><div class="t" style="left:355px;top:234px;height:16px;line-height:16px;color:#3b8c2c;letter-spacing:-0.203px;">PandasExcelWriter</div><div class="t" style="left:355px;top:250px;height:16px;line-height:16px;color:#3b8c2c;letter-spacing:-0.471px;">PandasSQLReader</div><div class="t" style="left:355px;top:266px;height:16px;line-height:16px;color:#3b8c2c;letter-spacing:-0.231px;">PandasSQLWriter</div><div class="t" style="left:355px;top:282px;height:16px;line-height:16px;color:#3b8c2c;letter-spacing:-0.024px;">Projection</div><div class="t" style="left:355px;top:298px;height:16px;line-height:16px;color:#3b8c2c;letter-spacing:-0.159px;">PythonCode</div><div class="t" style="left:355px;top:314px;height:16px;line-height:16px;color:#3b8c2c;letter-spacing:-0.450px;">RawExcelReader</div><div style="position:absolute;left:467px;top:57px;width:364px;height:600px;border:1px solid #b0b0b0;border-right:none;box-sizing:border-box;background:#fff"></div><div style="position:absolute;left:468px;top:58px;width:362px;height:20px;background:linear-gradient(#fbfbfb,#ececec);border-bottom:1px solid #b4b4b4;box-sizing:border-box"></div><div style="position:absolute;left:583px;top:58px;width:1px;height:19px;background:#c8c8c8"></div><div style="position:absolute;left:637px;top:58px;width:1px;height:19px;background:#c8c8c8"></div><div style="position:absolute;left:714px;top:58px;width:1px;height:19px;background:#c8c8c8"></div><div style="position:absolute;left:802px;top:58px;width:1px;height:19px;background:#c8c8c8"></div><div class="t" style="left:470px;top:60px;height:16px;line-height:16px;color:#141420;">Option</div><div class="t" style="left:587px;top:60px;height:16px;line-height:16px;color:#141420;letter-spacing:-0.270px;">Required</div><div class="t" style="left:641px;top:60px;height:16px;line-height:16px;color:#141420;letter-spacing:-0.465px;">Type</div><div class="t" style="left:718px;top:60px;height:16px;line-height:16px;color:#141420;letter-spacing:-0.174px;">Allowed Values</div><div class="t" style="left:806px;top:60px;height:16px;line-height:16px;color:#141420;">min</div><div class="t" style="left:491px;top:78px;height:16px;line-height:16px;color:#141420;">file</div><div class="t" style="left:587px;top:78px;height:16px;line-height:16px;color:#141420;">Y</div><div class="t" style="left:641px;top:78px;height:16px;line-height:16px;color:#141420;">string</div><div style="position:absolute;left:488px;top:94px;width:342px;height:16px;background:#efefef"></div><div class="t" style="left:491px;top:94px;height:16px;line-height:16px;color:#141420;">readAll</div><div class="t" style="left:641px;top:94px;height:16px;line-height:16px;color:#141420;">boolean,string</div><div class="t" style="left:718px;top:94px;height:16px;line-height:16px;color:#141420;">true,false,auto</div><svg style="position:absolute;left:475px;top:116px" width="8" height="4"><path d="M0 0H7L3.5 4Z" fill="#555"/></svg><div class="t" style="left:491px;top:110px;height:16px;line-height:16px;color:#141420;">symbols</div><div class="t" style="left:641px;top:110px;height:16px;line-height:16px;color:#141420;">list</div><svg style="position:absolute;left:495px;top:132px" width="8" height="4"><path d="M0 0H7L3.5 4Z" fill="#555"/></svg><div class="t" style="left:511px;top:126px;height:16px;line-height:16px;color:#b4b4b4;">schema</div><div class="t" style="left:641px;top:126px;height:16px;line-height:16px;color:#141420;">dict</div><div class="t" style="left:531px;top:142px;height:16px;line-height:16px;color:#141420;">name</div><div class="t" style="left:587px;top:142px;height:16px;line-height:16px;color:#141420;">Y</div><div class="t" style="left:641px;top:142px;height:16px;line-height:16px;color:#141420;">string</div><div class="t" style="left:531px;top:158px;height:16px;line-height:16px;color:#141420;">newName</div><div class="t" style="left:641px;top:158px;height:16px;line-height:16px;color:#141420;">string</div><div style="position:absolute;left:488px;top:174px;width:342px;height:16px;background:#efefef"></div><div class="t" style="left:491px;top:174px;height:16px;line-height:16px;color:#141420;">trace</div><div class="t" style="left:641px;top:174px;height:16px;line-height:16px;color:#141420;">integer</div><div style="position:absolute;left:468px;top:640px;width:362px;height:13px;background:linear-gradient(#fafafa,#ececec);border-top:1px solid #b4b4b4;box-sizing:border-box"></div><div style="position:absolute;left:481px;top:641px;width:1px;height:12px;background:#c8c8c8"></div><svg style="position:absolute;left:472px;top:643px" width="5" height="9"><path d="M4.5 0V9L0 4.5Z" fill="#505050"/></svg><div style="position:absolute;left:806px;top:641px;width:1px;height:12px;background:#c8c8c8"></div><div style="position:absolute;left:807px;top:641px;width:9px;height:12px;background:#e3e3e3"></div><div style="position:absolute;left:816px;top:641px;width:1px;height:12px;background:#c8c8c8"></div><svg style="position:absolute;left:820px;top:643px" width="5" height="9"><path d="M0 0V9L4.5 4.5Z" fill="#505050"/></svg><div style="position:absolute;left:831px;top:0px;width:4px;height:653px;background:#e9e9e9"></div><div style="position:absolute;left:829px;top:57px;width:1px;height:596px;background:#d0d0d0"></div><div style="position:absolute;left:830px;top:0px;width:1px;height:653px;background:#2f2f2f"></div><div style="position:absolute;left:831px;top:630px;width:1px;height:2px;background:#10206a"></div><div style="position:absolute;left:833px;top:630px;width:1px;height:8px;background:#d8893a"></div><div style="position:absolute;left:834px;top:630px;width:1px;height:8px;background:#111"></div>
</body></html>
